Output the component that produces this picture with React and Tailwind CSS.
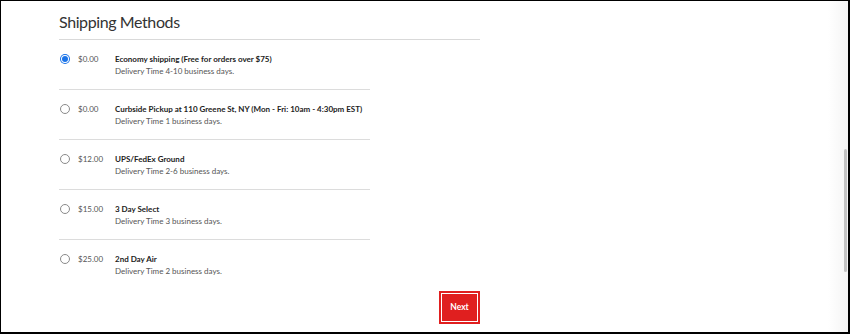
import React from 'react';

const methods = [
  { price: '$0.00', name: 'Economy shipping (Free for orders over $75)', time: 'Delivery Time 4-10 business days.', selected: true },
  { price: '$0.00', name: 'Curbside Pickup at 110 Greene St, NY (Mon - Fri: 10am - 4:30pm EST)', time: 'Delivery Time 1 business days.' },
  { price: '$12.00', name: 'UPS/FedEx Ground', time: 'Delivery Time 2-6 business days.' },
  { price: '$15.00', name: '3 Day Select', time: 'Delivery Time 3 business days.' },
  { price: '$25.00', name: '2nd Day Air', time: 'Delivery Time 2 business days.' },
];

function Radio({ checked }) {
  if (checked) {
    return (
      <span className="flex h-[10px] w-[10px] shrink-0 items-center justify-center rounded-full bg-[#1a73e8]">
        <span className="flex h-[8px] w-[8px] items-center justify-center rounded-full bg-white">
          <span className="h-[6px] w-[6px] rounded-full bg-[#1a73e8]" />
        </span>
      </span>
    );
  }
  return <span className="h-[10px] w-[10px] shrink-0 rounded-full border border-[#8a8a8a] bg-white" />;
}

export default function App() {
  return (
    <div className="relative h-[334px] w-[850px] overflow-hidden border-t border-l border-r-2 border-b-2 border-black bg-white font-['Lato',sans-serif]">
      {/* scrollbar track */}
      <div className="absolute top-0 right-0 bottom-0 w-[20px] bg-gradient-to-r from-white to-[#f4f4f4]" />
      <div className="absolute top-[148px] right-[1px] h-[123px] w-[3px] rounded-sm bg-[#c3c3c3]" />

      <div className="ml-[58px] w-[421px]">
        <h2 className="pt-[10px] pb-[6px] text-[16px] leading-[22px] tracking-[-0.4px] text-[#333]">Shipping Methods</h2>
        <div className="h-px bg-[#d9d9d9]" />

        <div className="w-[311px]">
          {methods.map((m, i) => (
            <div
              key={i}
              className={`flex pt-[13px] pb-[12px] ${i < methods.length - 1 ? 'border-b border-[#dcdcdc]' : ''}`}
            >
              <div className="flex h-[12px] items-center pl-px">
                <Radio checked={m.selected} />
              </div>
              <span className="ml-[8px] w-[37px] text-[8px] leading-[12px] text-[#555]">{m.price}</span>
              <div className="flex flex-col whitespace-nowrap">
                <span className="text-[8px] leading-[12px] font-bold text-[#222]">{m.name}</span>
                <span className="text-[8px] leading-[12px] text-[#555]">{m.time}</span>
              </div>
            </div>
          ))}
        </div>

        <div className="mt-[2px] flex justify-end">
          <div className="border-2 border-[#e01f1f] p-px">
            <button className="flex h-[27px] w-[35px] items-center justify-center bg-[#e01f1f] text-[8.5px] font-bold text-white">
              Next
            </button>
          </div>
        </div>
      </div>
    </div>
  );
}
